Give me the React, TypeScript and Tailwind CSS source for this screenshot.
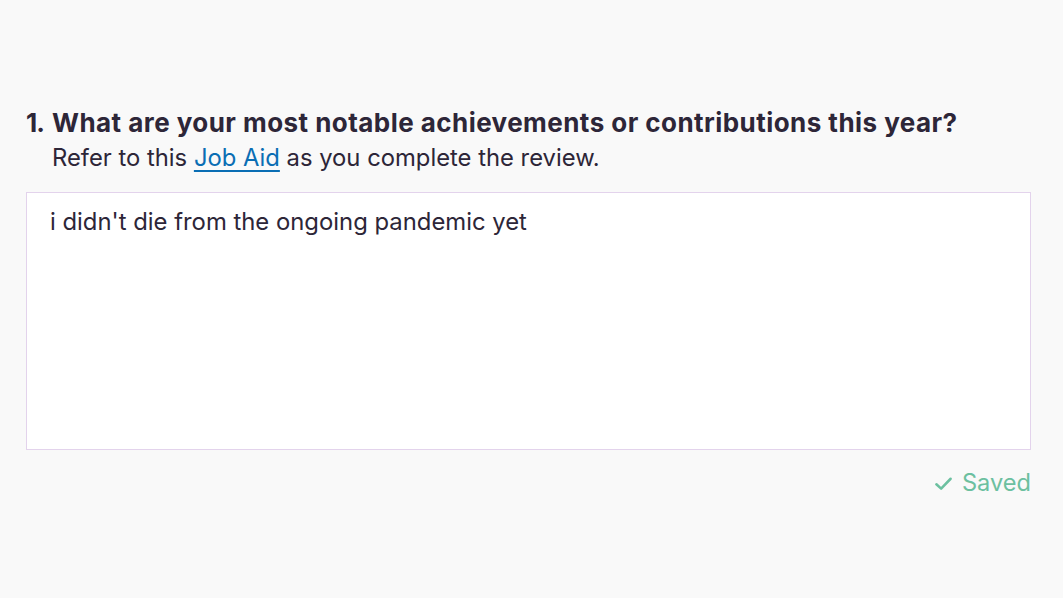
import React from "react";

export default function App() {
  return (
    <div className="min-h-[598px] w-full bg-[#f9f9f9] text-[#2d2638]" style={{ fontFamily: "Inter, 'Noto Sans', sans-serif" }}>
      <div className="pl-[26px] pr-[32px] pt-[105px]">
        <div className="flex items-baseline text-[26px] font-bold leading-[36px] tracking-[0.45px]">
          <span className="w-[26px] shrink-0 tracking-[-1px]">1.</span>
          <span>What are your most notable achievements or contributions this year?</span>
        </div>
        <div className="mt-[1px] pl-[26px] text-[23.8px] leading-[32px] text-[#2d2638]">
          Refer to this{" "}
          <a href="#" className="text-[#0a6eb4] underline underline-offset-[4px]">Job Aid</a>{" "}
          as you complete the review.
        </div>
        <div className="mt-[18px] h-[258px] border border-[#e3d3ec] bg-white px-[23px] pt-[13px] text-[23.85px] leading-[32px]">
          i didn't die from the ongoing pandemic yet
        </div>
        <div className="mt-[19px] flex items-center justify-end gap-[9px] text-[23.6px] leading-[28px] text-[#6cc0a0]">
          <svg width="19" height="19" viewBox="0 0 24 24" fill="none" stroke="currentColor" strokeWidth="3.2" strokeLinecap="round" strokeLinejoin="round">
            <path d="M3 13l6 5.5L21 6" />
          </svg>
          <span>Saved</span>
        </div>
      </div>
    </div>
  );
}
